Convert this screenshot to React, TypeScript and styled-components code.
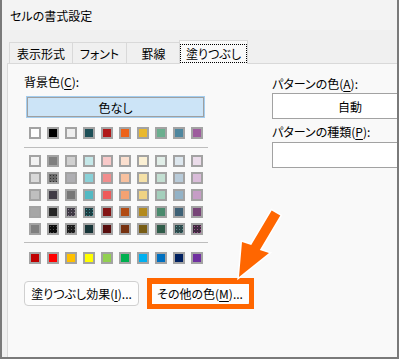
import React from "react";
import styled, { createGlobalStyle } from "styled-components";

const GlobalStyle = createGlobalStyle`
  html, body {
    margin: 0;
    padding: 0;
    background: #ffffff;
  }
  body {
    font-family: "Noto Sans CJK JP", "Noto Sans", sans-serif;
    font-size: 12px;
    font-feature-settings: "palt";
    color: #000;
  }
`;

const Window = styled.div`
  position: relative;
  width: 399px;
  height: 359px;
  box-sizing: border-box;
  border: 2px solid #7a7a7a;
  border-top: none;
  overflow: hidden;
  display: flex;
  flex-direction: column;
  background: #f0f0f0;
`;

const TitleBar = styled.div`
  height: 30px;
  flex: none;
  display: flex;
  align-items: center;
  padding-left: 8px;
  background: #f3f3f3;
  line-height: 15px;
`;

const TabStrip = styled.div`
  height: 33px;
  flex: none;
  display: flex;
  align-items: flex-end;
  padding-left: 7px;
`;

const Tab = styled.div<{ $width: number; $active?: boolean }>`
  box-sizing: border-box;
  width: ${(p) => p.$width}px;
  height: ${(p) => (p.$active ? 24 : 21)}px;
  margin-left: ${(p) => (p.$active ? -2 : -1)}px;
  margin-bottom: ${(p) => (p.$active ? -1 : 0)}px;
  border: 1px solid #d9d9d9;
  border-bottom: none;
  background: ${(p) => (p.$active ? "#f9f9f9" : "#f0f0f0")};
  display: flex;
  align-items: center;
  justify-content: center;
  line-height: 15px;
  position: relative;
  z-index: ${(p) => (p.$active ? 2 : 1)};
  &:first-child {
    margin-left: 0;
  }
`;

const FocusLabel = styled.span`
  border: 1px dotted #000;
  padding: 1px 5px;
  margin-top: 1px;
`;

const Panel = styled.div`
  flex: 1;
  margin-left: 5px;
  border-left: 1px solid #d9d9d9;
  border-top: 1px solid #d9d9d9;
  background: #f9f9f9;
  padding: 10px 0 0 16px;
  display: flex;
  flex-direction: column;
`;

const TopRow = styled.div`
  display: flex;
  gap: 64px;
`;

const LeftColumn = styled.div`
  width: 184px;
  flex: none;
  display: flex;
  flex-direction: column;
`;

const RightColumn = styled.div`
  width: 156px;
  flex: none;
  display: flex;
  flex-direction: column;
  padding-top: 2px;
`;

const Label = styled.div<{ $gap?: number }>`
  line-height: 15px;
  height: 15px;
  margin-top: ${(p) => p.$gap ?? 0}px;
  white-space: nowrap;
`;

const Key = styled.span`
  text-decoration: underline;
  text-underline-offset: 2px;
`;

const NoColorButton = styled.div`
  box-sizing: border-box;
  margin: 7px 0 0 2px;
  width: 179px;
  height: 22px;
  border: 1px solid #a3cdef;
  box-shadow: inset 0 0 0 1px #a0a0a0;
  background: #cce4f7;
  display: flex;
  align-items: center;
  justify-content: center;
  line-height: 15px;
`;

const SwatchGrid = styled.div<{ $top: number }>`
  display: grid;
  grid-template-columns: repeat(10, 12px);
  column-gap: 6px;
  row-gap: 5px;
  margin: ${(p) => p.$top}px 0 0 5px;
`;

const Swatch = styled.div<{ $color: string; $dots?: string }>`
  box-sizing: border-box;
  width: 12px;
  height: 12px;
  border: 2px solid #a3a3a3;
  background-color: ${(p) => p.$color};
  background-image: ${(p) =>
    p.$dots
      ? `radial-gradient(circle, ${p.$dots} 0.7px, transparent 0.9px)`
      : "none"};
  background-size: 3px 3px;
`;

const Separator = styled.div<{ $top: number }>`
  height: 1px;
  margin-top: ${(p) => p.$top}px;
  background: #bdbdbd;
`;

const Dropdown = styled.div<{ $gap: number }>`
  box-sizing: border-box;
  height: 26px;
  margin-top: ${(p) => p.$gap}px;
  border: 1px solid #a2a2a2;
  background: #ffffff;
  display: flex;
  align-items: center;
  justify-content: center;
  line-height: 15px;
`;

const ButtonRow = styled.div`
  display: flex;
  gap: 11px;
  margin-top: 17px;
`;

const Button = styled.div<{ $width: number }>`
  position: relative;
  box-sizing: border-box;
  width: ${(p) => p.$width}px;
  height: 25px;
  border: 1px solid #d0d0d0;
  border-radius: 4px;
  background: #fdfdfd;
  display: flex;
  align-items: center;
  justify-content: center;
  line-height: 15px;
  white-space: nowrap;
`;

const Highlight = styled.div`
  position: absolute;
  top: -4px;
  left: -4px;
  right: -5px;
  bottom: -4px;
  border: 5px solid #ff6600;
  border-top-width: 6px;
  pointer-events: none;
`;

const Arrow = styled.svg`
  position: absolute;
  left: 228px;
  top: 203px;
`;

const themeRow = [
  "#ffffff", "#000000", "#eeeeee", "#1d4f57", "#b01818",
  "#ec6219", "#e9b82d", "#6aae8e", "#4e869e", "#9d5c9d",
];

type Cell = { c: string; d?: string };

const themeBlock: Cell[][] = [
  [
    { c: "#f2f2f2" }, { c: "#7f7f7f" }, { c: "#d0d0d0" }, { c: "#c5e8e9" }, { c: "#f8c9c9" },
    { c: "#fbdfcf" }, { c: "#fbf0d4" }, { c: "#e1eee8" }, { c: "#dde7ee" }, { c: "#ebdcea" },
  ],
  [
    { c: "#d9d9d9" }, { c: "#6a6a6a", d: "#2f2f2f" }, { c: "#aeaeb2" }, { c: "#89d1d8" }, { c: "#f18d8d" },
    { c: "#f8c19f" }, { c: "#f5e1a7" }, { c: "#c3dfd2" }, { c: "#b8cbd9" }, { c: "#d9bcd9" },
  ],
  [
    { c: "#bfbfbf" }, { c: "#403b45" }, { c: "#777777" }, { c: "#52b9c3" }, { c: "#ef5b5b" },
    { c: "#f4a272" }, { c: "#f0d383" }, { c: "#a4cfbc" }, { c: "#93b2c6" }, { c: "#c69dc6" },
  ],
  [
    { c: "#a6a6a6" }, { c: "#262626" }, { c: "#3e3944", d: "#8a7f8e" }, { c: "#1b3e42", d: "#3d8d93" }, { c: "#841515" },
    { c: "#b24b13" }, { c: "#b38a1e" }, { c: "#4a8a6d" }, { c: "#3e6176" }, { c: "#774477" },
  ],
  [
    { c: "#7f7f7f" }, { c: "#0a0a0a", d: "#4a4a4a" }, { c: "#1c1c1c", d: "#5a5a5a" }, { c: "#173538" }, { c: "#580d0d" },
    { c: "#773210" }, { c: "#775c14" }, { c: "#2f5c49" }, { c: "#2c4a4c", d: "#5f8f8f" }, { c: "#3f2a3f", d: "#a0508f" },
  ],
];

const standardRow = [
  "#c00000", "#ff0000", "#ffc000", "#ffff00", "#92d050",
  "#00b050", "#00b0f0", "#0070c0", "#002060", "#7030a0",
];

export default function App() {
  return (
    <>
      <GlobalStyle />
      <Window>
        <TitleBar>セルの書式設定</TitleBar>
        <TabStrip>
          <Tab $width={64}>表示形式</Tab>
          <Tab $width={55}>フォント</Tab>
          <Tab $width={55}>罫線</Tab>
          <Tab $width={69} $active>
            <FocusLabel>塗りつぶし</FocusLabel>
          </Tab>
        </TabStrip>
        <Panel>
          <TopRow>
            <LeftColumn>
              <Label>
                背景色(<Key>C</Key>):
              </Label>
              <NoColorButton>色なし</NoColorButton>
              <SwatchGrid $top={9}>
                {themeRow.map((c, i) => (
                  <Swatch key={i} $color={c} />
                ))}
              </SwatchGrid>
              <Separator $top={8} />
              <SwatchGrid $top={7}>
                {themeBlock.flat().map((cell, i) => (
                  <Swatch key={i} $color={cell.c} $dots={cell.d} />
                ))}
              </SwatchGrid>
              <Separator $top={7} />
              <SwatchGrid $top={9}>
                {standardRow.map((c, i) => (
                  <Swatch key={i} $color={c} />
                ))}
              </SwatchGrid>
            </LeftColumn>
            <RightColumn>
              <Label>
                パターンの色(<Key>A</Key>):
              </Label>
              <Dropdown $gap={2}>自動</Dropdown>
              <Label $gap={5}>
                パターンの種類(<Key>P</Key>):
              </Label>
              <Dropdown $gap={3} />
            </RightColumn>
          </TopRow>
          <ButtonRow>
            <Button $width={115}>
              塗りつぶし効果(<Key>I</Key>)...
            </Button>
            <Button $width={100}>
              その他の色(<Key>M</Key>)...
              <Highlight />
            </Button>
          </ButtonRow>
        </Panel>
        <Arrow width="60" height="80" viewBox="228 203 60 80">
          <polygon
            points="269.7,210.5 278.3,215.5 257.8,250 267,253 237,277 240,242 249.2,245"
            fill="#ff6600"
            stroke="#ffffff"
            strokeWidth="3"
            strokeLinejoin="miter"
            paintOrder="stroke"
          />
        </Arrow>
      </Window>
    </>
  );
}
